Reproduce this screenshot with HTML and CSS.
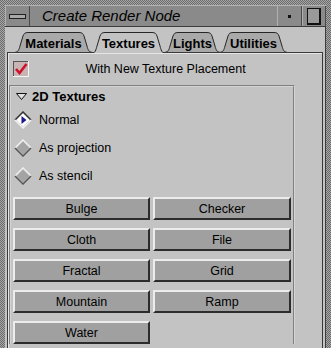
FILE: index.html
```html
<!DOCTYPE html>
<html lang="en">
<head>
    <meta charset="UTF-8">
    <title>Create Render Node</title>
    <link rel="stylesheet" href="styles.css">
</head>
<body>
    <div class="window">
        <div class="titlebar">
            <div class="tb-btn menu"><span class="bar"></span></div>
            <div class="title">Create Render Node</div>
            <div class="tb-btn dot"><span class="pip"></span></div>
            <div class="tb-btn max"><span class="box"></span></div>
        </div>
        <div class="content">
            <div class="tabs">
                <div class="tab" style="width:77px">
                    <svg width="77" height="20"><path d="M0.5,20 C3,20 4,18 5,14 L8,4 C9,1.5 10,0.5 13,0.5 L64,0.5 C67,0.5 68,1.5 69,4 L72,14 C73,18 74,20 76.5,20" /></svg>
                    <span>Materials</span>
                </div>
                <div class="tab active" style="width:73px">
                    <svg width="73" height="21"><path d="M0.5,21 C3,21 4,18 5,14 L8,4 C9,1.5 10,0.5 13,0.5 L60,0.5 C63,0.5 64,1.5 65,4 L68,14 C69,18 70,21 72.5,21" /></svg>
                    <span>Textures</span>
                </div>
                <div class="tab" style="width:55px">
                    <svg width="55" height="20"><path d="M0.5,20 C3,20 4,18 5,14 L8,4 C9,1.5 10,0.5 13,0.5 L42,0.5 C45,0.5 46,1.5 47,4 L50,14 C51,18 52,20 54.5,20" /></svg>
                    <span>Lights</span>
                </div>
                <div class="tab" style="width:67px">
                    <svg width="67" height="20"><path d="M0.5,20 C3,20 4,18 5,14 L8,4 C9,1.5 10,0.5 13,0.5 L54,0.5 C57,0.5 58,1.5 59,4 L62,14 C63,18 64,20 66.5,20" /></svg>
                    <span>Utilities</span>
                </div>
            </div>

            <div class="panel">
                <div class="placement">
                    <svg class="check" width="16" height="16" viewBox="0 0 16 16">
                        <rect x="0" y="0" width="16" height="16" fill="#f4f4f4"/>
                        <rect x="0" y="0" width="15" height="15" fill="#555"/>
                        <rect x="1" y="1" width="14" height="14" fill="#c9b4b4"/>
                        <path d="M3,8 L6.5,12 L13.5,3" fill="none" stroke="#d0102a" stroke-width="2.6"/>
                    </svg>
                    <span class="placement-label">With New Texture Placement</span>
                </div>

                <div class="group">
                    <div class="group-head">
                        <svg width="11" height="7" viewBox="0 0 11 7"><path d="M0.5,0.5 L10.5,0.5 L5.5,6.5 Z" fill="#e0e0e0" stroke="#111"/></svg>
                        <span>2D Textures</span>
                    </div>

                    <div class="radio">
                        <svg width="18" height="18" viewBox="0 0 18 18">
                            <path d="M1,9 L9,1 L17,9" fill="none" stroke="#333" stroke-width="1.5"/>
                            <path d="M1,9 L9,17 L17,9" fill="none" stroke="#f0f0f0" stroke-width="1.5"/>
                            <path d="M2.5,9 L9,2.5 L15.5,9 L9,15.5 Z" fill="#fff"/>
                            <path d="M7.5,5 L12.5,9 L7.5,13 Z" fill="#1a1a8c"/>
                        </svg>
                        <span>Normal</span>
                    </div>
                    <div class="radio">
                        <svg width="18" height="18" viewBox="0 0 18 18">
                            <path d="M1,9 L9,1 L17,9" fill="none" stroke="#eeeeee" stroke-width="1.5"/>
                            <path d="M1,9 L9,17 L17,9" fill="none" stroke="#555" stroke-width="1.5"/>
                            <path d="M2.5,9 L9,2.5 L15.5,9 L9,15.5 Z" fill="#a4a4a4"/>
                        </svg>
                        <span>As projection</span>
                    </div>
                    <div class="radio">
                        <svg width="18" height="18" viewBox="0 0 18 18">
                            <path d="M1,9 L9,1 L17,9" fill="none" stroke="#eeeeee" stroke-width="1.5"/>
                            <path d="M1,9 L9,17 L17,9" fill="none" stroke="#555" stroke-width="1.5"/>
                            <path d="M2.5,9 L9,2.5 L15.5,9 L9,15.5 Z" fill="#a4a4a4"/>
                        </svg>
                        <span>As stencil</span>
                    </div>

                    <div class="tex-buttons">
                        <button>Bulge</button>
                        <button>Checker</button>
                        <button>Cloth</button>
                        <button>File</button>
                        <button>Fractal</button>
                        <button>Grid</button>
                        <button>Mountain</button>
                        <button>Ramp</button>
                        <button>Water</button>
                    </div>
                </div>
            </div>
        </div>
    </div>
</body>
</html>
```

FILE: styles.css
```css
body {
    margin: 0;
    font-family: "Liberation Sans", Arial, sans-serif;
    color: #000;
}
.window {
    width: 331px;
    height: 348px;
    box-sizing: border-box;
    padding: 5px 5px 0 5px;
    background: repeating-conic-gradient(#a6a6a6 0 25%, #6c6c6c 0 50%) 0 0 / 2px 2px;
    display: flex;
    flex-direction: column;
    overflow: hidden;
}

/* title bar */
.titlebar {
    height: 22px;
    box-sizing: border-box;
    display: flex;
    background-color: #8a8a8a;
    border-top: 1px solid #b4b4b4;
    border-bottom: 1px solid #3c3c3c;
}
.tb-btn {
    width: 25px;
    box-sizing: border-box;
    display: flex;
    align-items: center;
    justify-content: center;
    border-left: 1px solid #b0b0b0;
    border-right: 1px solid #4a4a4a;
}
.tb-btn.max {
    width: 24px;
}
.bar {
    width: 15px;
    height: 3px;
    background-color: #a8a8a8;
    border: 1px solid #202020;
}
.pip {
    width: 3px;
    height: 3px;
    background-color: #111;
}
.box {
    width: 11px;
    height: 14px;
    background-color: #9a9a9a;
    border: 1px solid #111;
    border-right-width: 2px;
    border-bottom-width: 2px;
}
.title {
    flex: 1;
    font-size: 15px;
    font-style: italic;
    line-height: 20px;
    padding-left: 12px;
}

/* tabs */
.content {
    flex: 1;
    background-color: #c3c3c3;
    padding-left: 2px;
    border-right: 1px solid #3c3c3c;
    display: flex;
    flex-direction: column;
}
.tabs {
    height: 25px;
    display: flex;
    align-items: flex-end;
    padding-left: 8px;
}
.tab {
    position: relative;
    height: 20px;
    display: flex;
    align-items: center;
    justify-content: center;
    font-size: 13px;
    font-weight: bold;
}
.tab svg {
    position: absolute;
    left: 0;
    top: 0;
}
.tab path {
    fill: #a9a9a9;
    stroke: #262626;
    stroke-width: 1;
}
.tab span {
    position: relative;
    padding-top: 2px;
}
.tab.active {
    height: 21px;
    margin-bottom: -1px;
    z-index: 1;
}
.tab.active path {
    fill: #c3c3c3;
}

/* panel */
.panel {
    flex: 1;
    margin-right: 2px;
    border: 1px solid #3a3a3a;
    border-bottom: none;
    box-shadow: inset 1px 1px 0 #e6e6e6;
}
.placement {
    height: 32px;
    display: flex;
    align-items: center;
    padding-left: 5px;
}
.check {
    flex: none;
}
.placement-label {
    flex: 1;
    text-align: center;
    font-size: 12.5px;
    padding-right: 20px;
}
.group {
    width: 286px;
    box-sizing: border-box;
    margin-left: 1px;
    border: 2px groove #d4d4d4;
    border-bottom: none;
    padding: 0 2px;
}
.group-head {
    height: 19px;
    display: flex;
    align-items: center;
    gap: 5px;
    padding-left: 3px;
    font-size: 13px;
    font-weight: bold;
}
.radio {
    height: 28px;
    display: flex;
    align-items: center;
    gap: 7px;
    font-size: 12.5px;
    padding-left: 1px;
}
.tex-buttons {
    margin-top: 7px;
    display: grid;
    grid-template-columns: 137px 138px;
    grid-auto-rows: 23px;
    column-gap: 3px;
    row-gap: 8px;
}
.tex-buttons button {
    font-family: "Liberation Sans", Arial, sans-serif;
    font-size: 12.5px;
    color: #000;
    background-color: #a0a0a0;
    border: 2px solid;
    border-color: #ececec #2c2c2c #2c2c2c #ececec;
    padding: 0;
}
```
